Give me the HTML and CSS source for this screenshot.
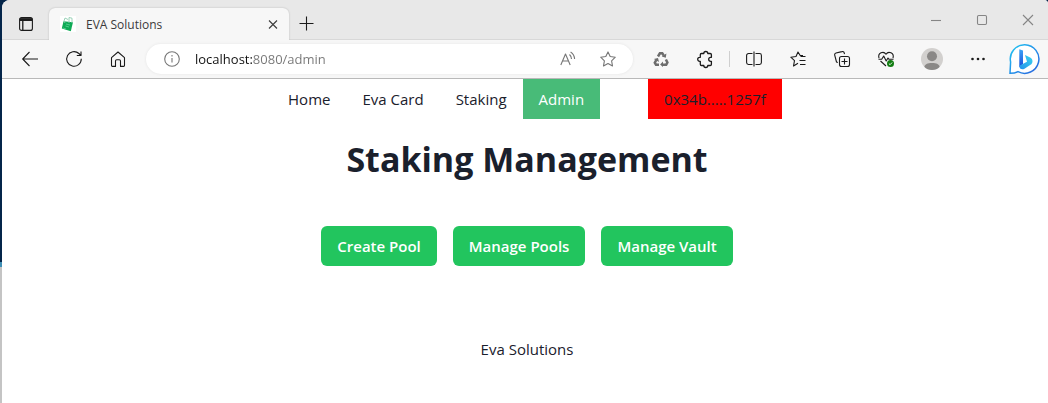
FILE: index.html
```html
<!DOCTYPE html>
<html lang="en">
<head>
<meta charset="utf-8">
<title>EVA Solutions</title>
<link rel="stylesheet" href="styles.css">
</head>
<body>
<div class="window">
  <header class="tab-strip">
    <button class="tab-actions" aria-label="Tab actions">
      <svg class="icon" viewBox="0 0 16 16"><rect x="1.6" y="1.6" width="12.8" height="12.8" rx="2"/><path d="M1.6 3.2H14.4M4.8 5V14" stroke-width="1.3"/><path d="M2 2.2H14V5H2z" fill="currentColor" stroke="none"/></svg>
    </button>
    <div class="tab">
      <svg class="favicon" viewBox="0 0 16 16"><rect width="16" height="16" fill="#fff"/><path d="M3.5 5.2 13 6.2 10.800 15.200 1.800 12.400z" fill="#0eaa55"/><path d="M5 7 4 5 5 2 8 3.500M9 7V1.500L12 2.200V7" fill="none" stroke="#8fcdb0" stroke-width=".9"/><path d="M6 8l4 1M5.500 10l3.500 1M3 12l3 1" stroke="#5fd497" stroke-width=".8"/></svg>
      <span class="tab-title">EVA Solutions</span>
      <button class="tab-close" aria-label="Close tab"><svg class="icon" viewBox="0 0 16 16"><path d="m4 4.500 8 8M12 4.500l-8 8"/></svg></button>
    </div>
    <button class="new-tab" aria-label="New tab"><svg class="icon" viewBox="0 0 16 16"><path d="M8.500 1.500v14M1.500 8.500h14"/></svg></button>
    <div class="window-controls">
      <button aria-label="Minimize"><svg class="icon" viewBox="0 0 16 16"><path d="M3 8.500h10"/></svg></button>
      <button aria-label="Maximize"><svg class="icon" viewBox="0 0 16 16"><rect x="3.500" y="3.500" width="9" height="9" rx="1.200"/></svg></button>
      <button aria-label="Close"><svg class="icon" viewBox="0 0 16 16"><path d="m3 3 10 10M13 3 3 13"/></svg></button>
    </div>
  </header>

  <div class="toolbar">
    <button class="tool" aria-label="Back"><svg class="icon" viewBox="0 0 16 16"><path d="M16 8H.700M7.500 1 .700 8l6.800 7"/></svg></button>
    <button class="tool" aria-label="Refresh"><svg class="icon" viewBox="0 0 16 16"><path d="M15.300 7.800A7.300 7.300 0 1 1 12.900 2.500L15 4.500M15 .500v4h-4.200"/></svg></button>
    <button class="tool" aria-label="Home"><svg class="icon" viewBox="0 0 16 16"><path d="M1.500 6.600 8 1l6.500 5.600v7.900a.9.9 0 0 1-.9.900h-3.100V10a1.200 1.200 0 0 0-1.200-1.200H6.700A1.200 1.200 0 0 0 5.500 10v5.400H2.400a.9.9 0 0 1-.9-.9z"/></svg></button>
    <div class="address">
      <button class="address-icon" aria-label="Site information"><svg class="icon" viewBox="0 0 16 16"><circle cx="8" cy="8" r="7.300"/><path d="M8 7v4.600M8 4v1.500"/></svg></button>
      <input class="url" type="text" value="localhost:8080/admin" aria-label="Address">
      <button class="address-icon" aria-label="Read aloud"><svg class="icon" viewBox="0 0 16 16"><path d="M.800 14 5.500 3 10.200 14M2.500 10h6M9.500 3.500a6 6 0 0 1 2 4.600M10.600 1a9 9 0 0 1 4 7.100"/></svg></button>
      <button class="address-icon" aria-label="Add to favorites"><svg class="icon" viewBox="0 0 16 16"><path d="m8 .900 2.200 4.600 5.100.700-3.700 3.600.900 5.100L8 12.500l-4.500 2.400.9-5.100L.700 6.200l5.100-.7z"/></svg></button>
    </div>
    <button class="tool recycle" aria-label="Recycle extension"><svg class="icon" viewBox="0 0 16 16"><path d="m5 5.500 1.900-3.200h2.400l1.500 2.400M3.300 9l-1.500 2.700L3 13.700h3M12.900 8.500l1.500 3-1.200 2.200H10" stroke-width="2.500"/><path d="m8.800 5.500 4 1.300.6-4.200zM.800 8 5 7l1 4zM10 10.600v5.400l-2.900-2.500z" fill="currentColor" stroke="none"/></svg></button>
    <button class="tool" aria-label="Extensions"><svg class="icon" viewBox="0 0 16 16"><path d="M4.500 2.500h2.300a2 2 0 0 1 4 0h2.400a1.200 1.200 0 0 1 1.200 1.200v2.600h-.7a2 2 0 0 0 0 4h.7v3a1.200 1.200 0 0 1-1.200 1.200h-2.400a2 2 0 0 1-4 0H4.500a1.200 1.200 0 0 1-1.200-1.200v-3h-.6a2 2 0 0 1 0-4h.6V3.700a1.200 1.200 0 0 1 1.200-1.200z" stroke-width="1.300"/></svg></button>
    <span class="separator"></span>
    <button class="tool" aria-label="Split screen"><svg class="icon" viewBox="0 0 16 16"><path d="M6.500 2.500h-4A1.900 1.900 0 0 0 .6 4.400v7.200a1.900 1.900 0 0 0 1.900 1.900h4M9.500 2.500h4a1.900 1.900 0 0 1 1.900 1.900v7.200a1.900 1.900 0 0 1-1.900 1.900h-4M8 .500v15"/></svg></button>
    <button class="tool" aria-label="Favorites"><svg class="icon" viewBox="0 0 16 16"><path d="M13 4.500h-2.800L8 1 6 5.500l-5.200.700 3.700 3.500L3.500 15 8 12.300M10.500 5.500h5M9.500 9.500h6M10 13.500h5.500"/></svg></button>
    <button class="tool" aria-label="Collections"><svg class="icon" viewBox="0 0 16 16"><rect x="5.500" y="5.500" width="10" height="10" rx="2"/><path d="M10.500 7.500v6M7.500 10.500h6M3.800 11.500 2.500 11 .700 4.200A1.800 1.800 0 0 1 2 2L8 .600a1.800 1.800 0 0 1 2.200 1.300l.3 1.300"/></svg></button>
    <button class="tool" aria-label="Browser essentials"><svg class="icon" viewBox="0 0 16 16"><path d="M1 7.200C-.500 2 5.500-.500 8 3.200 10.500-.500 16.500 2 15 7.200M2.500 10 8 15M.500 8.300h3.200L5.700 5 8.200 10l1.800-3 1 1.300h4.500"/><circle cx="12.500" cy="12.500" r="3.500" fill="#107c10" stroke="none"/><path d="m10.900 12.600 1.200 1.100 2-2.200" stroke="#fff" stroke-width=".9"/></svg></button>
    <button class="tool spaced" aria-label="Profile"><svg class="avatar" viewBox="0 0 22 22"><clipPath id="disc"><circle cx="11" cy="11" r="11"/></clipPath><g clip-path="url(#disc)"><path d="M0 0h22v22H0z" fill="#d2d0ce"/><circle cx="11" cy="8.300" r="5" fill="#8a8886"/><path d="M3 20c.5-4 3.500-5 8-5s7.500 1 8 5l-3 2H6z" fill="#8a8886"/></g></svg></button>
    <button class="tool spaced" aria-label="Settings and more"><svg class="icon" viewBox="0 0 16 16"><g fill="currentColor" stroke="none"><circle cx="2.500" cy="8" r="1.300"/><circle cx="8" cy="8" r="1.300"/><circle cx="13.500" cy="8" r="1.300"/></g></svg></button>
    <button class="tool spaced" aria-label="Bing chat"><svg class="bing" viewBox="0 0 32 32"><defs><linearGradient id="ring" x1="0" y1="0" x2="1" y2="1"><stop offset="0" stop-color="#25c9f2"/><stop offset=".55" stop-color="#238de8"/><stop offset="1" stop-color="#2b62dc"/></linearGradient><linearGradient id="stem" x1="0" y1="0" x2="0" y2="1"><stop offset="0" stop-color="#3aa5f8"/><stop offset="1" stop-color="#1a4bd8"/></linearGradient><linearGradient id="bowl" x1="0" y1="1" x2="1" y2="0"><stop offset="0" stop-color="#2190eb"/><stop offset="1" stop-color="#3cd5ee"/></linearGradient></defs><path d="M2 30.300 2.600 19A14.300 14.300 0 1 1 10 28.700C7.500 30 5 30.300 2 30.300z" fill="#fff" stroke="url(#ring)" stroke-width="1.500"/><path d="M11.300 6.200 15 7.600V21l-3.700 3z" fill="url(#stem)"/><path d="m17 12 5.200 2.400c3 1.600 3 5.600.3 7.400l-6 4c-2.600 1.300-5.200.2-5.200-3L19 18.700z" fill="url(#bowl)"/></svg></button>
  </div>

  <main class="page">
    <nav class="nav">
      <a class="nav-link" href="#home">Home</a>
      <a class="nav-link" href="#card">Eva Card</a>
      <a class="nav-link" href="#staking">Staking</a>
      <a class="nav-link active" href="#admin" aria-current="page">Admin</a>
      <button class="wallet">0x34b.....1257f</button>
    </nav>
    <h1 class="title">Staking Management</h1>
    <div class="actions">
      <button class="action">Create Pool</button>
      <button class="action">Manage Pools</button>
      <button class="action">Manage Vault</button>
    </div>
    <footer class="footer">Eva Solutions</footer>
  </main>
</div>
</body>
</html>
```
FILE: styles.css
```css
* { box-sizing: border-box; }

body {
  margin: 0;
  padding-left: 2px;
  background: linear-gradient(#04254a 0 262px, #3f8fb5 262px 267px, #c4c4c4 267px);
  font-family: "Segoe UI", "Open Sans", "Noto Sans", sans-serif;
}

button {
  display: flex;
  align-items: center;
  justify-content: center;
  padding: 0;
  border: 0;
  background: none;
  color: inherit;
  font: inherit;
  cursor: pointer;
}

.window {
  display: flex;
  flex-direction: column;
  min-height: 100vh;
  border-radius: 8px 4px 0 0;
  background: #fff;
  overflow: hidden;
}

.icon {
  width: 16px;
  height: 16px;
  fill: none;
  stroke: currentColor;
  stroke-width: 1.1;
  stroke-linejoin: round;
  overflow: visible;
}

.tab-strip {
  display: flex;
  align-items: flex-end;
  height: 40px;
  border-bottom: 1px solid #d8d8d8;
  background: #e8e8e8;
  color: #1b1b1b;
}

.tab-actions {
  width: 47px;
  height: 31px;
}

.tab {
  display: flex;
  align-items: center;
  width: 240px;
  height: 32px;
  margin-bottom: -1px;
  padding: 0 8px 0 11px;
  border-radius: 6px 6px 0 0;
  background: #f7f7f7;
  box-shadow: 0 0 2px #b5b5b5;
  clip-path: inset(-3px -3px 0);
}

.favicon {
  width: 16px;
  height: 16px;
}

.tab-title {
  flex: 1;
  margin-left: 10px;
  color: #3b3b3b;
  font-size: 12px;
}

.tab-close {
  width: 16px;
  height: 16px;
  color: #3b3b3b;
}

.new-tab {
  width: 34px;
  height: 32px;
}

.window-controls {
  display: flex;
  align-self: flex-start;
  gap: 6px;
  margin-left: auto;
  color: #858585;
}

.window-controls button {
  width: 40px;
  height: 40px;
}

.toolbar {
  display: flex;
  align-items: center;
  height: 39px;
  padding: 0 2px 0 6px;
  border-bottom: 1px solid #b9b9b9;
  background: #f7f7f7;
  color: #1b1b1b;
}

.tool {
  flex: none;
  width: 44px;
  height: 38px;
}

.spaced { margin-left: 2px; }

.recycle { color: #6d6d6d; }

.recycle .icon { stroke-linejoin: miter; }

.separator {
  width: 1px;
  height: 16px;
  margin: 0 2px;
  background: #cfcfcf;
}

.avatar {
  width: 22px;
  height: 22px;
}

.bing {
  width: 32px;
  height: 32px;
}

.address {
  display: flex;
  flex: 1;
  align-items: center;
  min-width: 0;
  height: 30px;
  margin: 0 6px;
  padding: 0 5px 0 6px;
  border-radius: 15px;
  background: #fff;
  box-shadow: 0 0 3px #e4e4e4;
}

.address-icon {
  flex: none;
  width: 40px;
  height: 30px;
  color: #767676;
}

.url {
  flex: 1;
  min-width: 0;
  margin-left: 3px;
  padding: 0;
  border: 0;
  outline: 0;
  background: linear-gradient(90deg, #111 57px, #767676 57px);
  background-clip: text;
  color: transparent;
  caret-color: #111;
  font: inherit;
  font-size: 13px;
  line-height: 20px;
}

.page {
  display: flex;
  flex-direction: column;
  align-items: center;
  padding-left: 4px;
  color: #1a202c;
  font-size: 15px;
  line-height: 24px;
}

.nav { display: flex; }

.nav-link {
  padding: 8px 16px;
  color: inherit;
  text-decoration: none;
}

.active {
  background: #48bb78;
  color: #fff;
}

.wallet {
  margin-left: 48px;
  padding: 8px 16px;
  background: #f00;
}

.title {
  margin: 20px 0 47px;
  font-size: 34px;
  font-weight: 700;
  line-height: 40px;
}

.actions {
  display: flex;
  gap: 16px;
}

.action {
  padding: 8px 16px;
  border-radius: 6px;
  background: #22c55e;
  color: #fff;
  font-weight: 600;
}

.footer { margin-top: 71px; }
```
